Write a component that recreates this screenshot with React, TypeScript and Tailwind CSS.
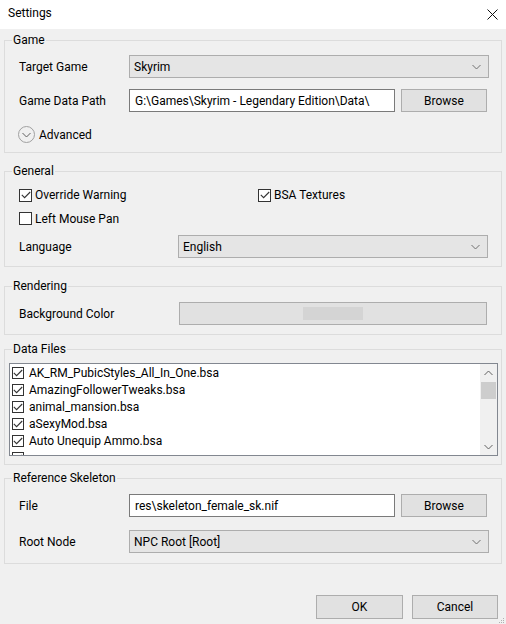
const dataFiles = [
  'AK_RM_PubicStyles_All_In_One.bsa',
  'AmazingFollowerTweaks.bsa',
  'animal_mansion.bsa',
  'aSexyMod.bsa',
  'Auto Unequip Ammo.bsa',
  '',
];

function Chevron({ className = '' }: { className?: string }) {
  return (
    <svg width="9" height="6" viewBox="0 0 9 6" className={className}>
      <path d="M0.5 1 L4.5 5 L8.5 1" fill="none" stroke="currentColor" strokeWidth="1" />
    </svg>
  );
}

function Combo({ value, width }: { value: string; width: string }) {
  return (
    <div
      className={`${width} h-[23px] flex items-center justify-between bg-[#e5e5e5] border border-[#adadad] pl-[4px] pr-[7px]`}
    >
      <span>{value}</span>
      <Chevron className="text-[#707070]" />
    </div>
  );
}

function TextBox({ value }: { value: string }) {
  return (
    <div className="w-[266px] h-[23px] flex items-center bg-white border border-[#7a7a7a] px-[5px]">
      {value}
    </div>
  );
}

function Button({ label, width }: { label: string; width: string }) {
  return (
    <div
      className={`${width} h-[23px] flex items-center justify-center bg-[#e1e1e1] border border-[#adadad]`}
    >
      {label}
    </div>
  );
}

function CheckBox({ checked, size = 'w-[13px] h-[13px]' }: { checked: boolean; size?: string }) {
  return (
    <div className={`${size} shrink-0 bg-white border border-[#333333] flex items-center justify-center`}>
      {checked && (
        <svg width="10" height="8" viewBox="0 0 10 8">
          <path d="M0.8 3.8 L3.6 6.6 L9.2 1" fill="none" stroke="#333333" strokeWidth="1.1" />
        </svg>
      )}
    </div>
  );
}

function Group({ title, className, children }: { title: string; className: string; children: React.ReactNode }) {
  return (
    <fieldset className={`mx-[4px] border border-[#dcdcdc] ${className}`}>
      <legend className="ml-[7px] px-px leading-[16px]">{title}</legend>
      {children}
    </fieldset>
  );
}

export default function App() {
  return (
    <div
      className="w-[506px] h-[624px] bg-[#f0f0f0] text-[12px] leading-[16px] text-black overflow-hidden"
      style={{ fontFamily: 'Roboto, "Noto Sans", sans-serif' }}
    >
      <div className="h-[29px] bg-white flex items-center justify-between pl-[8px] pr-[8px] pb-[3px]">
        <span>Settings</span>
        <svg width="11" height="11" viewBox="0 0 11 11" className="mt-[3px]">
          <path d="M0.5 0.5 L10.5 10.5 M10.5 0.5 L0.5 10.5" stroke="#111" strokeWidth="1" />
        </svg>
      </div>

      <Group title="Game" className="mt-[3px] pb-[9px]">
        <div className="mt-[7px] flex items-center pl-[14px]">
          <span className="w-[110px]">Target Game</span>
          <Combo value="Skyrim" width="w-[360px]" />
        </div>
        <div className="mt-[11px] flex items-center pl-[14px]">
          <span className="w-[110px]">Game Data Path</span>
          <TextBox value="G:\Games\Skyrim - Legendary Edition\Data\" />
          <div className="ml-[6px]">
            <Button label="Browse" width="w-[86px]" />
          </div>
        </div>
        <div className="mt-[14px] flex items-center pl-[13px] h-[17px]">
          <div className="w-[17px] h-[17px] rounded-full border border-[#a0a0a0] flex items-center justify-center">
            <Chevron className="text-[#606060] mt-px" />
          </div>
          <span className="ml-[4px]">Advanced</span>
        </div>
      </Group>

      <Group title="General" className="mt-[10px] pb-[8px]">
        <div className="mt-[8px] grid grid-cols-[239px_1fr] pl-[14px] h-[13px] items-center">
          <div className="flex items-center gap-[3px]">
            <CheckBox checked />
            <span>Override Warning</span>
          </div>
          <div className="flex items-center gap-[3px]">
            <CheckBox checked />
            <span>BSA Textures</span>
          </div>
        </div>
        <div className="mt-[12px] flex items-center gap-[3px] pl-[14px] h-[13px]">
          <CheckBox checked={false} />
          <span>Left Mouse Pan</span>
        </div>
        <div className="mt-[10px] flex items-center pl-[14px]">
          <span className="w-[159px]">Language</span>
          <Combo value="English" width="w-[310px]" />
        </div>
      </Group>

      <Group title="Rendering" className="mt-[11px] pb-[9px]">
        <div className="mt-[8px] flex items-center pl-[14px]">
          <span className="w-[160px]">Background Color</span>
          <div className="w-[308px] h-[23px] flex items-center justify-center bg-[#e1e1e1] border border-[#adadad]">
            <div className="w-[60px] h-[13px] bg-[#d4d4d4]" />
          </div>
        </div>
      </Group>

      <Group title="Data Files" className="mt-[6px] pb-[8px]">
        <div className="mt-[6px] ml-[4px] w-[489px] h-[93px] bg-white border border-[#828790] flex overflow-hidden">
          <div className="flex-1 pl-[2px] overflow-hidden">
            {dataFiles.map((f, i) => (
              <div key={i} className="h-[17px] flex items-center gap-[5px]">
                <CheckBox checked size="w-[12px] h-[12px]" />
                <span className="whitespace-nowrap">{f}</span>
              </div>
            ))}
          </div>
          <div className="w-[17px] bg-[#f0f0f0] flex flex-col items-center">
            <div className="h-[17px] flex items-center justify-center">
              <Chevron className="text-[#606060] rotate-180" />
            </div>
            <div className="mt-px w-[15px] h-[17px] bg-[#cdcdcd]" />
            <div className="flex-1" />
            <div className="h-[17px] flex items-center justify-center">
              <Chevron className="text-[#606060]" />
            </div>
          </div>
        </div>
      </Group>

      <Group title="Reference Skeleton" className="mt-[5px] pb-[10px]">
        <div className="mt-[8px] flex items-center pl-[14px]">
          <span className="w-[110px]">File</span>
          <TextBox value="res\skeleton_female_sk.nif" />
          <div className="ml-[6px]">
            <Button label="Browse" width="w-[86px]" />
          </div>
        </div>
        <div className="mt-[13px] flex items-center pl-[14px]">
          <span className="w-[110px]">Root Node</span>
          <Combo value="NPC Root [Root]" width="w-[360px]" />
        </div>
      </Group>

      <div className="mt-[31px] flex justify-end items-end pr-[8px] gap-[9px] relative">
        <Button label="OK" width="w-[87px] h-[24px]" />
        <Button label="Cancel" width="w-[86px] h-[24px]" />
        <svg width="6" height="6" viewBox="0 0 6 6" className="absolute right-[1px] bottom-[-5px]">
          <rect x="4" y="0" width="1" height="1" fill="#b0b0b0" />
          <rect x="2" y="2" width="1" height="1" fill="#b0b0b0" />
          <rect x="4" y="2" width="1" height="1" fill="#b0b0b0" />
          <rect x="0" y="4" width="1" height="1" fill="#b0b0b0" />
          <rect x="2" y="4" width="1" height="1" fill="#b0b0b0" />
          <rect x="4" y="4" width="1" height="1" fill="#b0b0b0" />
        </svg>
      </div>
    </div>
  );
}
